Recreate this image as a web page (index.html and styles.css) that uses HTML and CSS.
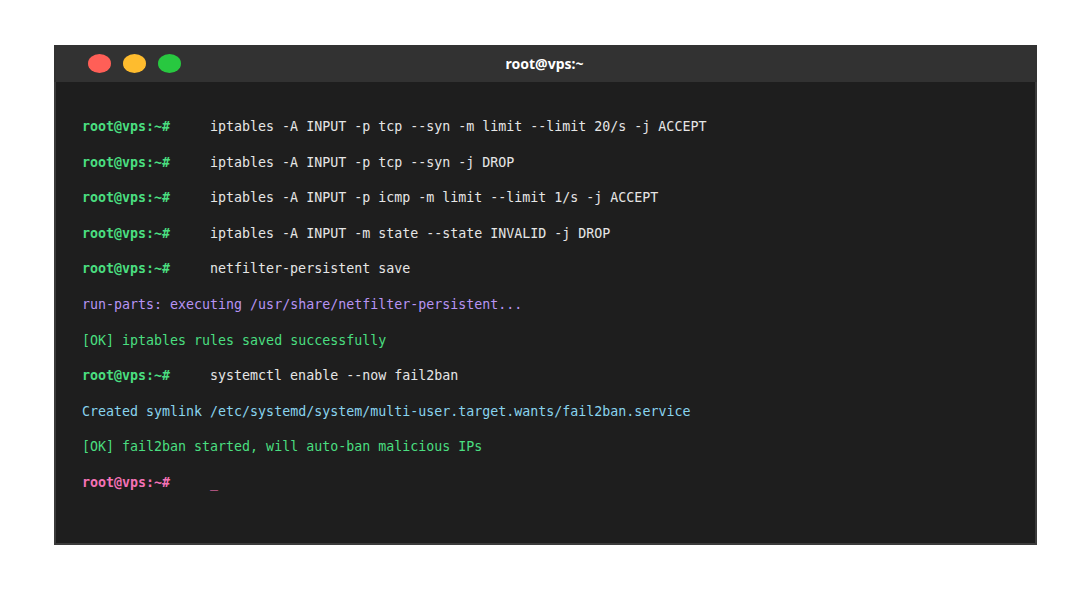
FILE: index.html
```html
<!DOCTYPE html>
<html>
<head>
<meta charset="utf-8">
<link rel="stylesheet" href="styles.css">
</head>
<body>
<div class="stage">
  <div class="window">
    <div class="titlebar">
      <div class="dots">
        <span class="dot red"></span>
        <span class="dot yellow"></span>
        <span class="dot green"></span>
      </div>
      <div class="title">root@vps:~</div>
    </div>
    <div class="term">
      <div class="line"><span class="prompt">root@vps:~#</span><span class="cmd">iptables -A INPUT -p tcp --syn -m limit --limit 20/s -j ACCEPT</span></div>
      <div class="line"><span class="prompt">root@vps:~#</span><span class="cmd">iptables -A INPUT -p tcp --syn -j DROP</span></div>
      <div class="line"><span class="prompt">root@vps:~#</span><span class="cmd">iptables -A INPUT -p icmp -m limit --limit 1/s -j ACCEPT</span></div>
      <div class="line"><span class="prompt">root@vps:~#</span><span class="cmd">iptables -A INPUT -m state --state INVALID -j DROP</span></div>
      <div class="line"><span class="prompt">root@vps:~#</span><span class="cmd">netfilter-persistent save</span></div>
      <div class="line purple">run-parts: executing /usr/share/netfilter-persistent...</div>
      <div class="line ok">[OK] iptables rules saved successfully</div>
      <div class="line"><span class="prompt">root@vps:~#</span><span class="cmd">systemctl enable --now fail2ban</span></div>
      <div class="line cyan">Created symlink /etc/systemd/system/multi-user.target.wants/fail2ban.service</div>
      <div class="line ok">[OK] fail2ban started, will auto-ban malicious IPs</div>
      <div class="line"><span class="prompt pink">root@vps:~#</span><span class="cursor">_</span></div>
    </div>
  </div>
</div>
</body>
</html>
```
FILE: styles.css
```css
html, body {
  margin: 0;
  padding: 0;
  background: #ffffff;
}
.stage {
  width: 1090px;
  height: 590px;
  box-sizing: border-box;
  padding: 45px 53px 45px 54px;
  display: flex;
}
.window {
  flex: 1;
  display: flex;
  flex-direction: column;
}
.titlebar {
  height: 37px;
  background: #323232;
  display: flex;
  align-items: center;
  position: relative;
  padding-left: 34px;
}
.dots {
  display: flex;
  gap: 12px;
}
.dot {
  width: 23px;
  height: 19px;
  border-radius: 50%;
  display: block;
}
.red { background: #ff5f57; }
.yellow { background: #febc2e; }
.green { background: #28c840; }
.title {
  position: absolute;
  left: 0;
  right: 0;
  top: 0;
  bottom: 0;
  display: flex;
  align-items: center;
  justify-content: center;
  color: #ffffff;
  font-family: "Noto Sans", "Open Sans", sans-serif;
  font-weight: 700;
  font-size: 14px;
  padding-right: 2px;
}
.term {
  flex: 1;
  background: #1e1e1e;
  border: 2px solid #3b3b3b;
  border-top: none;
  padding: 27px 26px 0 26px;
  font-family: "DejaVu Sans Mono", monospace;
  font-size: 13.3px;
  line-height: 35.6px;
  color: #e6e6e6;
}
.line {
  white-space: pre;
}
.prompt {
  color: #4ade80;
  font-weight: 700;
  margin-right: 40px;
}
.prompt.pink {
  color: #f472b6;
}
.cmd {
  color: #e6e6e6;
}
.purple { color: #b794f4; }
.ok { color: #4ade80; }
.cyan { color: #89d4ee; }
.cursor { color: #f472b6; }
```
